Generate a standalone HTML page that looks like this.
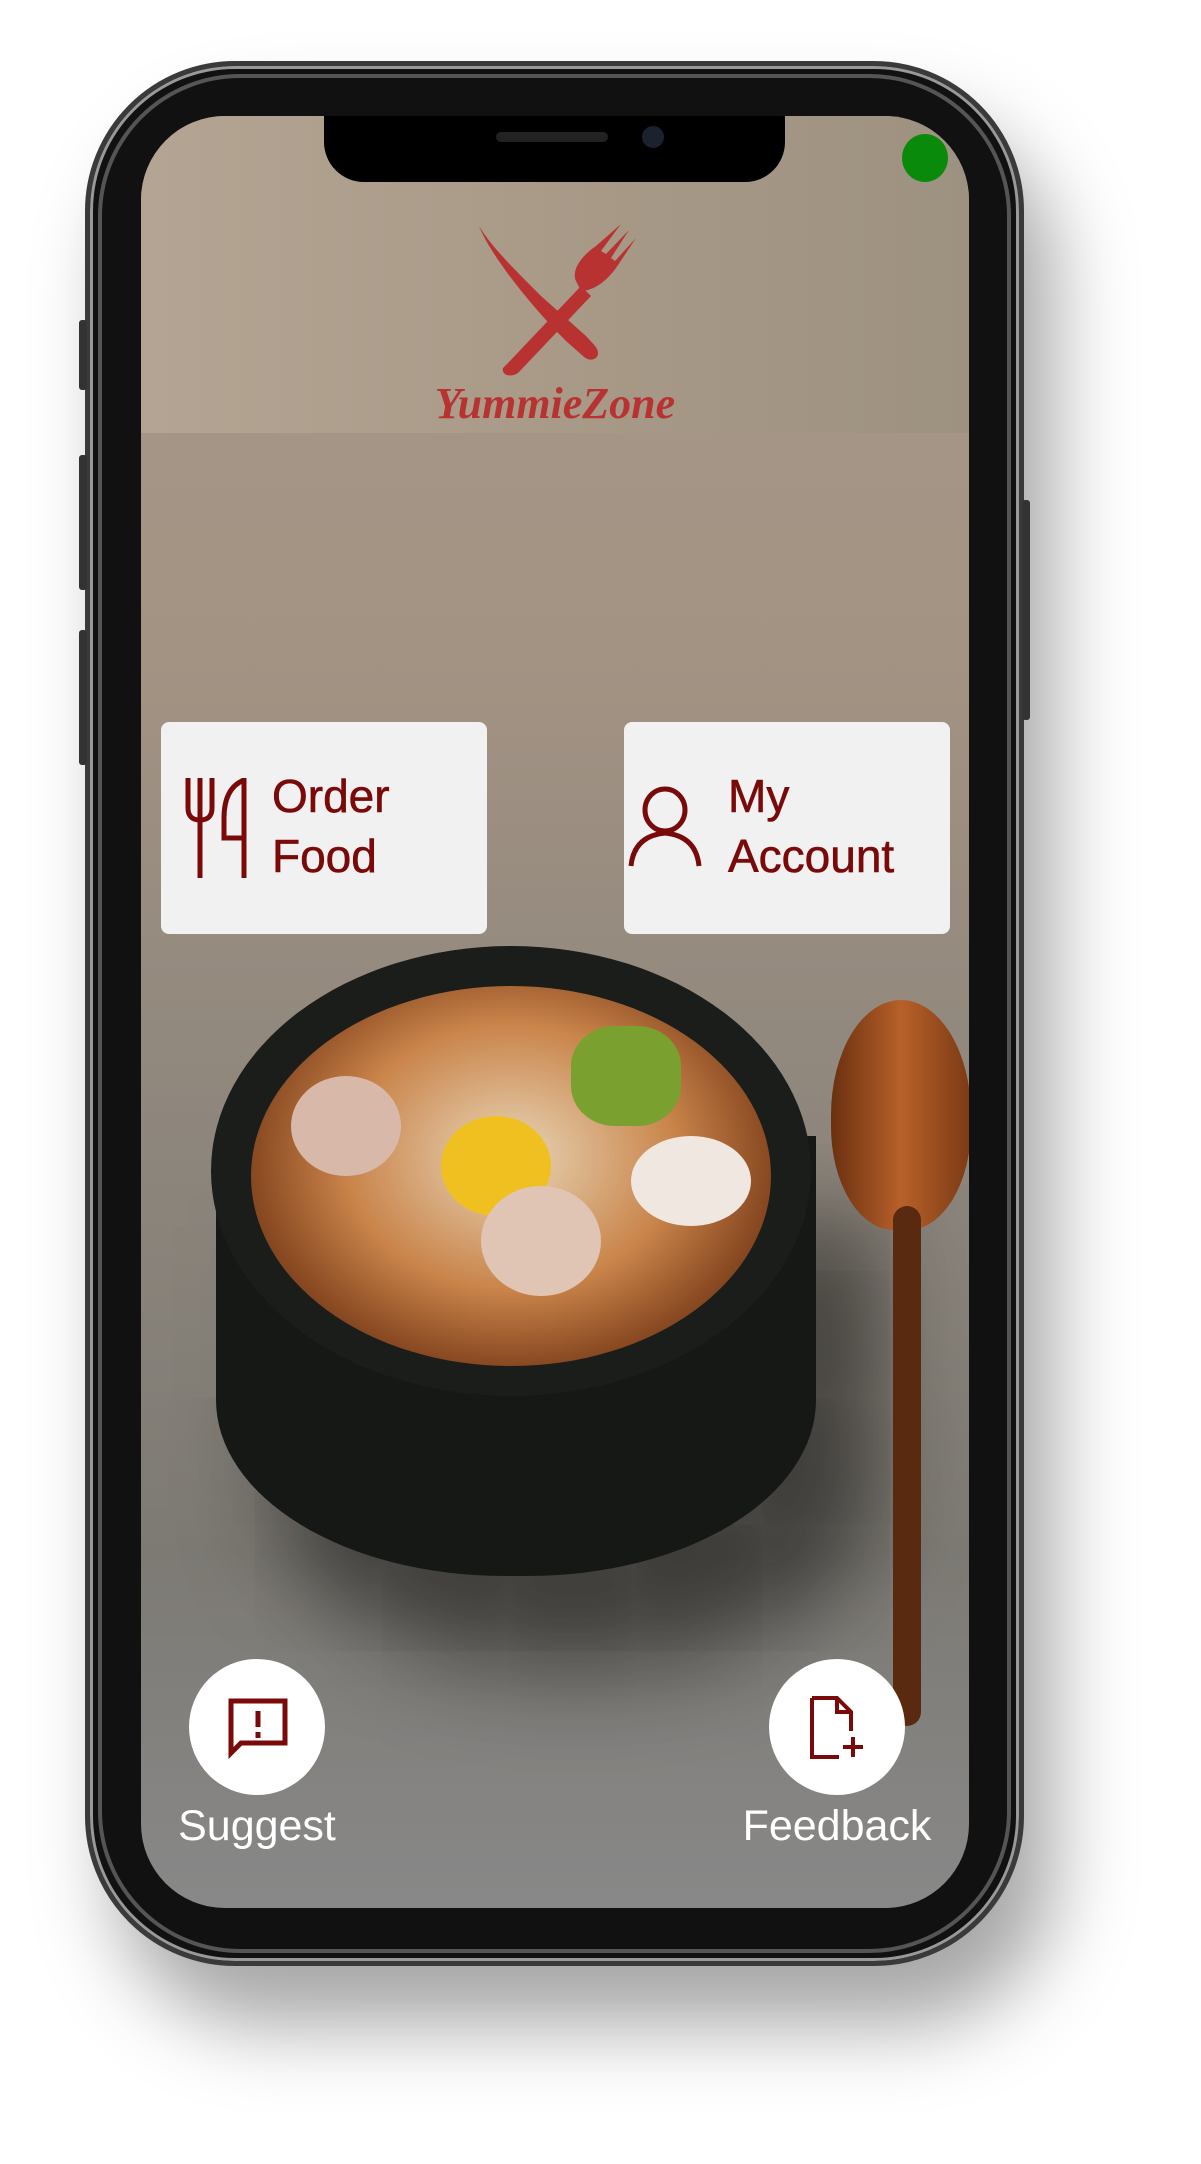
<!DOCTYPE html>
<html><head><meta charset="utf-8"><style>
*{margin:0;padding:0;box-sizing:border-box}
body{width:1201px;height:2164px;background:#fff;position:relative;overflow:hidden;font-family:"Liberation Sans",sans-serif}
.phone{position:absolute;left:85px;top:61px;width:939px;height:1905px;border-radius:150px;background:#111;border:5px solid #3a3a3a;box-shadow:30px 60px 80px rgba(0,0,0,.35),0 0 0 3px #999 inset}
.phone:before{content:"";position:absolute;inset:8px;border-radius:142px;border:4px solid #555}
.btn{position:absolute;background:#333;width:8px;border-radius:3px}
.screen{position:absolute;left:141px;top:116px;width:828px;height:1792px;border-radius:84px;overflow:hidden;background:linear-gradient(180deg,#a8988a 0%,#a39383 30%,#8f877d 55%,#7d7a74 80%,#888 100%)}
.hdr{position:absolute;left:0;top:0;width:100%;height:317px;background:linear-gradient(90deg,#b4a493,#a99a88 50%,#9d917f)}
.notch{position:absolute;left:183px;top:0;width:461px;height:66px;background:#000;border-radius:0 0 40px 40px}
.card{position:absolute;top:606px;width:326px;height:212px;background:#f1f1f1;border-radius:8px;color:#7a0a0a;font-size:46px;line-height:60px;-webkit-text-stroke:0.6px #7a0a0a}
.circ{position:absolute;width:136px;height:136px;border-radius:50%;background:#fff;top:1543px}
.lbl{position:absolute;top:1686px;color:#fff;font-size:43px;width:300px;text-align:center}
</style></head><body>
<div class="phone"></div>
<div class="btn" style="left:79px;top:320px;height:70px"></div>
<div class="btn" style="left:79px;top:455px;height:135px"></div>
<div class="btn" style="left:79px;top:630px;height:135px"></div>
<div class="btn" style="left:1022px;top:500px;height:220px"></div>
<div class="screen">
 <div class="hdr"></div>
 <div class="notch"><div style="position:absolute;left:172px;top:16px;width:112px;height:10px;border-radius:5px;background:#222"></div><div style="position:absolute;left:318px;top:10px;width:22px;height:22px;border-radius:50%;background:#1a2230"></div></div>
 <div style="position:absolute;left:761px;top:18px;width:46px;height:48px;border-radius:50%;background:#0a8a0a"></div>
 <svg style="position:absolute;left:330px;top:100px" width="180" height="170" viewBox="0 0 180 170">
  <g fill="#b83232">
   <path d="M8 10 C20 40 60 90 95 125 L112 140 C118 146 126 144 127 138 C128 132 120 126 115 120 L70 80 C40 50 20 30 8 10Z"/>
   <path d="M36 148 L110 70 L120 80 L48 156 C42 162 30 160 32 152Z"/>
   <path d="M105 65 C100 55 110 40 125 30 L150 8 L130 35 L135 38 L158 14 L140 42 L144 45 L165 22 L145 52 C132 70 118 75 110 75Z"/>
  </g>
 </svg>
 <div style="position:absolute;left:0;width:828px;top:262px;text-align:center;color:#b83232;font-family:'Liberation Serif',serif;font-style:italic;font-weight:bold;font-size:44px">YummieZone</div>
 <!-- bowl -->
 <div style="position:absolute;left:75px;top:1020px;width:600px;height:440px;border-radius:0 0 48% 48%/0 0 40% 40%;background:#161816;box-shadow:60px 90px 90px rgba(20,20,18,.6)"></div>
 <div style="position:absolute;left:70px;top:830px;width:600px;height:450px;border-radius:50%;background:#1b1d1a"></div>
 <div style="position:absolute;left:110px;top:870px;width:520px;height:380px;border-radius:50%;background:radial-gradient(ellipse at 50% 45%,#e8d6b8 0%,#c9844a 45%,#8a4a22 70%,#2a1a10 100%)"></div>
 <div style="position:absolute;left:300px;top:1000px;width:110px;height:100px;border-radius:50%;background:#f0c020"></div>
 <div style="position:absolute;left:430px;top:910px;width:110px;height:100px;border-radius:40%;background:#7aa030"></div>
 <div style="position:absolute;left:150px;top:960px;width:110px;height:100px;border-radius:50%;background:#d8b8a8"></div>
 <div style="position:absolute;left:340px;top:1070px;width:120px;height:110px;border-radius:50%;background:#e0c4b4"></div>
 <div style="position:absolute;left:490px;top:1020px;width:120px;height:90px;border-radius:50%;background:#f0e8e0"></div>
 <!-- spoon -->
 <div style="position:absolute;left:690px;top:884px;width:140px;height:230px;border-radius:50% 50% 45% 45%;background:linear-gradient(90deg,#6a3010,#b8602a,#7a3a14)"></div>
 <div style="position:absolute;left:752px;top:1090px;width:28px;height:520px;border-radius:14px;background:#5a2a10"></div>
 <div class="card" style="left:20px"><svg style="position:absolute;left:23px;top:56px" width="64" height="100" viewBox="0 0 64 100"><g fill="none" stroke="#7a0a0a" stroke-width="5"><path d="M4 0V30Q4 42 16 42Q28 42 28 30V0M16 0V100M60 2Q40 10 40 40L40 60L60 60M60 0V100"/></g></svg><div style="position:absolute;left:111px;top:44px">Order<br>Food</div></div>
 <div class="card" style="left:483px"><svg style="position:absolute;left:4px;top:64px" width="74" height="82" viewBox="0 0 74 82"><g fill="none" stroke="#7a0a0a" stroke-width="5"><ellipse cx="37" cy="24" rx="20" ry="21"/><path d="M3 80Q6 50 37 47Q68 50 71 80"/></g></svg><div style="position:absolute;left:104px;top:44px">My<br>Account</div></div>
 <div class="circ" style="left:48px"><svg style="position:absolute;left:38px;top:38px" width="62" height="62" viewBox="0 0 62 62"><path d="M4 4H58V46H14L4 56Z" fill="none" stroke="#7a0a0a" stroke-width="5"/><path d="M31 14V30M31 35V41" stroke="#7a0a0a" stroke-width="5"/></svg></div>
 <div class="circ" style="left:628px"><svg style="position:absolute;left:40px;top:36px" width="60" height="66" viewBox="0 0 60 66"><path d="M3 3H28L42 17V36M3 3V62H30" fill="none" stroke="#7a0a0a" stroke-width="4"/><path d="M28 3V17H42M44 42V62M34 52H54" fill="none" stroke="#7a0a0a" stroke-width="4"/></svg></div>
 <div class="lbl" style="left:-34px">Suggest</div>
 <div class="lbl" style="left:546px">Feedback</div>
</div>
</body></html>
